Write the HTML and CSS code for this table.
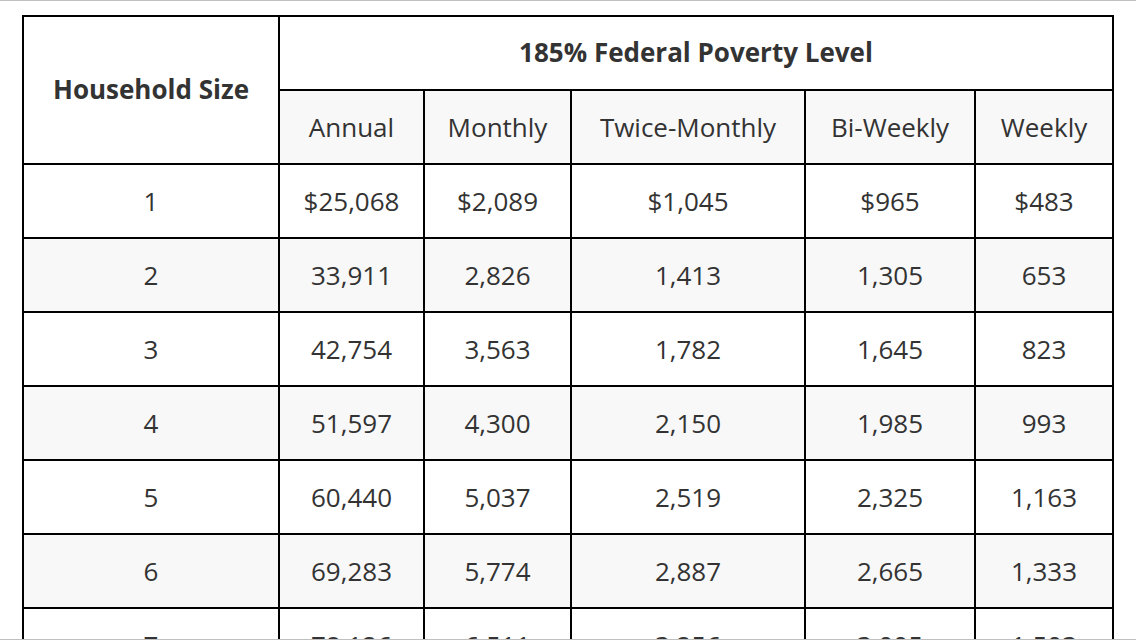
FILE: index.html
```html
<!DOCTYPE html>
<html>
<head>
<meta charset="utf-8">
<link rel="stylesheet" href="styles.css">
</head>
<body>
<div class="frame">
  <table class="fpl">
    <colgroup>
      <col class="c-size">
      <col class="c-annual">
      <col class="c-monthly">
      <col class="c-twice">
      <col class="c-bi">
      <col class="c-weekly">
    </colgroup>
    <thead>
      <tr class="head-top">
        <th rowspan="2" class="size-head">Household Size</th>
        <th colspan="5">185% Federal Poverty Level</th>
      </tr>
      <tr class="head-sub">
        <td>Annual</td>
        <td>Monthly</td>
        <td>Twice-Monthly</td>
        <td>Bi-Weekly</td>
        <td>Weekly</td>
      </tr>
    </thead>
    <tbody>
      <tr><td>1</td><td>$25,068</td><td>$2,089</td><td>$1,045</td><td>$965</td><td>$483</td></tr>
      <tr><td>2</td><td>33,911</td><td>2,826</td><td>1,413</td><td>1,305</td><td>653</td></tr>
      <tr><td>3</td><td>42,754</td><td>3,563</td><td>1,782</td><td>1,645</td><td>823</td></tr>
      <tr><td>4</td><td>51,597</td><td>4,300</td><td>2,150</td><td>1,985</td><td>993</td></tr>
      <tr><td>5</td><td>60,440</td><td>5,037</td><td>2,519</td><td>2,325</td><td>1,163</td></tr>
      <tr><td>6</td><td>69,283</td><td>5,774</td><td>2,887</td><td>2,665</td><td>1,333</td></tr>
      <tr><td>7</td><td>78,126</td><td>6,511</td><td>3,256</td><td>3,005</td><td>1,503</td></tr>
    </tbody>
  </table>
</div>
</body>
</html>
```

FILE: styles.css
```css
html, body {
  margin: 0;
  padding: 0;
  background: #ffffff;
}

.frame {
  box-sizing: border-box;
  height: 640px;
  overflow: hidden;
  border-top: 1px solid #c0c0c0;
  border-bottom: 1px solid #c0c0c0;
  padding: 14px 0 0 22px;
}

.fpl {
  border-collapse: collapse;
  table-layout: fixed;
  width: 1092px;
  font-family: "Open Sans", "Liberation Sans", sans-serif;
  font-size: 26px;
  color: #333333;
}

.c-size { width: 256px; }
.c-annual { width: 145px; }
.c-monthly { width: 147px; }
.c-twice { width: 234px; }
.c-bi { width: 170px; }
.c-weekly { width: 138px; }

.fpl th,
.fpl td {
  border: 2px solid #000000;
  padding: 0;
  height: 72px;
  text-align: center;
  vertical-align: middle;
  white-space: nowrap;
}

.fpl th {
  font-weight: 700;
  font-size: 26px;
  padding-bottom: 2px;
  height: 70px;
  background: #ffffff;
}

.head-sub td {
  background: #f8f8f8;
}

.fpl tbody tr:nth-child(even) td {
  background: #f8f8f8;
}
```
